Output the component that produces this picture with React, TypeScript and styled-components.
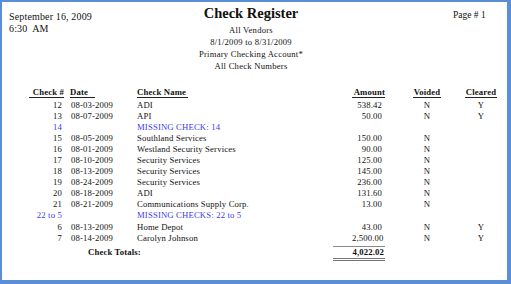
import React from 'react';
import styled, { createGlobalStyle } from 'styled-components';

const GlobalStyle = createGlobalStyle`
  html, body {
    margin: 0;
    padding: 0;
    background: #ffffff;
  }
  body {
    font-family: "Liberation Serif", "Times New Roman", serif;
    color: #111;
  }
`;

const Frame = styled.div`
  width: 511px;
  height: 284px;
  box-sizing: border-box;
  border-style: solid;
  border-color: #5a8fd8;
  border-width: 2px 4px 4px 2px;
  background: #fff;
  overflow: hidden;
`;

const TopBar = styled.div`
  display: grid;
  grid-template-columns: 160px 178px 1fr;
  height: 72px;
`;

const Stamp = styled.div`
  padding: 9px 0 0 7px;
  font-size: 10px;
  line-height: 12px;
  letter-spacing: 0.15px;
`;

const Heading = styled.div`
  display: flex;
  flex-direction: column;
  align-items: center;
  padding-top: 3px;
`;

const Title = styled.div`
  font-size: 14.5px;
  font-weight: bold;
  line-height: 16px;
  margin-bottom: 3px;
`;

const SubLine = styled.div`
  font-size: 8.6px;
  line-height: 12px;
  letter-spacing: 0.25px;
  white-space: nowrap;
`;

const PageNo = styled.div`
  padding: 7px 0 0 113px;
  font-size: 9.5px;
  line-height: 12px;
`;

const Table = styled.div`
  display: grid;
  grid-template-columns: 35px 73px 215px 33px 14px 56px 52px;
  padding-left: 27px;
  margin-top: 13px;
  font-size: 8.7px;
  line-height: 11.05px;
  letter-spacing: 0.15px;
`;

const Head = styled.div<{ $col: number; $align: 'left' | 'right' | 'center'; $w?: number; $indent?: number }>`
  grid-row: 1;
  grid-column: ${p => p.$col};
  align-self: start;
  justify-self: ${p => (p.$align === 'center' ? 'center' : p.$align === 'right' ? 'stretch' : 'start')};
  width: ${p => (p.$w ? `${p.$w}px` : 'auto')};
  margin-left: ${p => p.$indent || 0}px;
  margin-bottom: 2px;
  text-align: ${p => p.$align};
  font-weight: bold;
  line-height: 10px;
  border-bottom: 1px solid #222;
  white-space: nowrap;
`;

const Cell = styled.div<{ $align?: 'left' | 'right' | 'center'; $missing?: boolean; $indent?: number; $pr?: number; $lead?: boolean }>`
  grid-column-start: ${p => (p.$lead ? 1 : 'auto')};
  height: 11.05px;
  text-align: ${p => p.$align || 'left'};
  color: ${p => (p.$missing ? '#3b3bf2' : '#111')};
  padding-left: ${p => p.$indent || 0}px;
  padding-right: ${p => p.$pr || 0}px;
  white-space: nowrap;
`;

const TotalLabel = styled.div`
  grid-column: 2 / 3;
  padding-left: 24px;
  margin-top: 3px;
  line-height: 11px;
  font-weight: bold;
  white-space: nowrap;
`;

const TotalAmount = styled.div`
  grid-column: 3 / 5;
  justify-self: end;
  align-self: start;
  width: 51px;
  margin-top: 2px;
  padding: 0 1px 1px 0;
  line-height: 10px;
  text-align: right;
  font-weight: bold;
  border-top: 1px solid #8a8a8a;
  border-bottom: 3px double #777;
`;

type Row = {
  num: string;
  date?: string;
  name: string;
  amount?: string;
  voided?: string;
  cleared?: string;
  missing?: boolean;
};

const rows: Row[] = [
  { num: '12', date: '08-03-2009', name: 'ADI', amount: '538.42', voided: 'N', cleared: 'Y' },
  { num: '13', date: '08-07-2009', name: 'API', amount: '50.00', voided: 'N', cleared: 'Y' },
  { num: '14', name: 'MISSING CHECK: 14', missing: true },
  { num: '15', date: '08-05-2009', name: 'Southland Services', amount: '150.00', voided: 'N' },
  { num: '16', date: '08-01-2009', name: 'Westland Security Services', amount: '90.00', voided: 'N' },
  { num: '17', date: '08-10-2009', name: 'Security Services', amount: '125.00', voided: 'N' },
  { num: '18', date: '08-13-2009', name: 'Security Services', amount: '145.00', voided: 'N' },
  { num: '19', date: '08-24-2009', name: 'Security Services', amount: '236.00', voided: 'N' },
  { num: '20', date: '08-18-2009', name: 'ADI', amount: '131.60', voided: 'N' },
  { num: '21', date: '08-21-2009', name: 'Communications Supply Corp.', amount: '13.00', voided: 'N' },
  { num: '22 to 5', name: 'MISSING CHECKS: 22 to 5', missing: true },
  { num: '6', date: '08-13-2009', name: 'Home Depot', amount: '43.00', voided: 'N', cleared: 'Y' },
  { num: '7', date: '08-14-2009', name: 'Carolyn Johnson', amount: '2,500.00', voided: 'N', cleared: 'Y' },
];

const App: React.FC = () => {
  return (
    <>
      <GlobalStyle />
      <Frame>
        <TopBar>
          <Stamp>
            <div>September 16, 2009</div>
            <div>6:30&nbsp; AM</div>
          </Stamp>
          <Heading>
            <Title>Check Register</Title>
            <SubLine>All Vendors</SubLine>
            <SubLine>8/1/2009 to 8/31/2009</SubLine>
            <SubLine>Primary Checking Account*</SubLine>
            <SubLine>All Check Numbers</SubLine>
          </Heading>
          <PageNo>Page # 1</PageNo>
        </TopBar>

        <Table>
          <Head $col={1} $align="right">Check #</Head>
          <Head $col={2} $align="left" $w={25} $indent={6}>Date</Head>
          <Head $col={3} $align="left" $w={51}>Check Name</Head>
          <Head $col={4} $align="right">Amount</Head>
          <Head $col={6} $align="center" $w={28}>Voided</Head>
          <Head $col={7} $align="center" $w={32}>Cleared</Head>
          {rows.map((r, i) => (
            <React.Fragment key={i}>
              <Cell $lead $align="right" $pr={2} $missing={r.missing}>{r.num}</Cell>
              <Cell $indent={7}>{r.date}</Cell>
              <Cell $missing={r.missing}>{r.name}</Cell>
              <Cell $align="right" $pr={3}>{r.amount}</Cell>
              <Cell />
              <Cell $align="center">{r.voided}</Cell>
              <Cell $align="center">{r.cleared}</Cell>
            </React.Fragment>
          ))}
          <TotalLabel>Check Totals:</TotalLabel>
          <TotalAmount>4,022.02</TotalAmount>
        </Table>
      </Frame>
    </>
  );
};

export default App;
